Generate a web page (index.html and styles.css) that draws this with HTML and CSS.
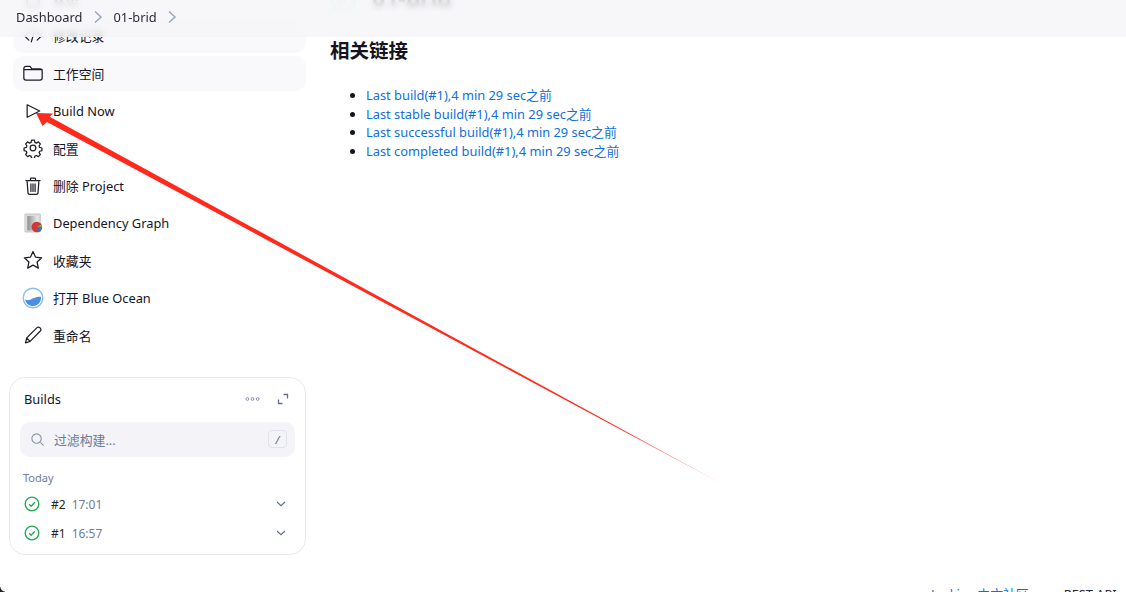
FILE: index.html
```html
<!DOCTYPE html>
<html lang="zh">
<head>
<meta charset="utf-8">
<title>01-brid</title>
<link rel="stylesheet" href="styles.css">
</head>
<body>
<div class="page">
  <header class="topbar">
    <span class="crumb">Dashboard</span>
    <svg class="sep" viewBox="0 0 10 14"><path d="M2 1.500 8 7l-6 5.500"/></svg>
    <span class="crumb">01-brid</span>
    <svg class="sep" viewBox="0 0 10 14"><path d="M2 1.500 8 7l-6 5.500"/></svg>
  </header>

  <div class="app">
    <aside class="sidebar">
      <nav class="menu">
        <a class="item"><svg class="ico" viewBox="0 0 24 24"><rect x="5" y="3" width="14" height="18" rx="2"/></svg><span>状态</span></a>
        <a class="item tinted"><svg class="ico" viewBox="0 0 24 24"><path d="M7 7l-5 5 5 5M17 7l5 5-5 5M14 5l-4 14"/></svg><span>修改记录</span></a>
        <a class="item tinted"><svg class="ico" viewBox="0 0 24 24"><path d="M1 6.500A2.500 2.500 0 0 1 3.500 4h5l2 3h10a2.500 2.500 0 0 1 2.500 2.500v8.500a2.500 2.500 0 0 1-2.500 2.500h-17A2.500 2.500 0 0 1 1 18zM1 8h22"/></svg><span>工作空间</span></a>
        <a class="item"><svg class="ico" viewBox="0 0 24 24"><path d="M5 4.500v15L20 12z"/></svg><span>Build Now</span></a>
        <a class="item"><svg class="ico" viewBox="0 0 24 24"><circle cx="12" cy="12" r="3.400"/><path d="M10.300 2.500h3.400l.6 2.800 1.700.8 2.500-1.400 2.300 2.500-1.500 2.400.7 1.700 2.700.7v3.200l-2.700.7-.7 1.700 1.500 2.400-2.300 2.400-2.500-1.400-1.700.8-.6 2.700h-3.400l-.6-2.700-1.700-.8-2.500 1.400-2.300-2.400 1.500-2.400-.7-1.700-2.700-.7v-3.200l2.700-.7.7-1.700L3.200 7.200l2.300-2.500L8 6.100l1.700-.8z"/></svg><span>配置</span></a>
        <a class="item"><svg class="ico" viewBox="0 0 24 24"><path d="M5 7l1 13.500a1.800 1.800 0 0 0 1.800 1.500h8.400a1.800 1.800 0 0 0 1.800-1.500L19 7M3.500 5.500h17M9 5.500V3.500a1 1 0 0 1 1-1h4a1 1 0 0 1 1 1v2M9.500 9.500v9M12 9.500v9M14.500 9.500v9"/></svg><span>删除 Project</span></a>
        <a class="item"><svg class="ico raw" viewBox="0 0 20 20"><defs><linearGradient id="doc" x1="0" x2="1" y1="0" y2="0"><stop offset="0" stop-color="#8f8f8f"/><stop offset="1" stop-color="#ececec"/></linearGradient></defs><rect x="2.300" y="1" width="15" height="18" fill="#dcdcdc" stroke="#bbb" stroke-width=".8"/><rect x="4.300" y="3" width="10.500" height="14.500" fill="url(#doc)"/><circle cx="13.800" cy="14" r="5.300" fill="#d5343a"/><path d="M13.800 14H19.100A5.300 5.300 0 0 1 15.500 19z" fill="#3a70c4"/><path d="M13.800 14 18.300 11.200A5.300 5.300 0 0 1 19.100 14z" fill="#77b33c"/></svg><span>Dependency Graph</span></a>
        <a class="item"><svg class="ico" viewBox="0 0 24 24"><path d="M12 1.800l3 6.700 7.400.9-5.500 5 1.500 7.300L12 18.100l-6.400 3.600 1.500-7.300-5.500-5 7.400-.9z"/></svg><span>收藏夹</span></a>
        <a class="item"><svg class="ico raw wide" viewBox="0 0 22 22"><circle cx="11" cy="11" r="9.800" fill="#fff" stroke="#8fbdf0" stroke-width="1.400"/><path d="M3 12.500c2.500 1.500 5 .3 7.700-1 3-1.500 5.800-2 8.300-1.800C19.500 15 15.500 19 11 19 7 19 3.800 16.300 3 12.500z" fill="#4b8fe2"/></svg><span>打开 Blue Ocean</span></a>
        <a class="item"><svg class="ico" viewBox="0 0 24 24"><path d="M3 21.500l1.500-6L16.800 3.200a2.300 2.300 0 0 1 3.300 0l.7.700a2.300 2.300 0 0 1 0 3.300L8.500 19.700zM4.500 15.500l4 4.200"/></svg><span>重命名</span></a>
      </nav>

      <section class="card">
        <div class="card-head">
          <span class="card-title">Builds</span>
          <div class="card-tools">
            <svg class="dots" viewBox="0 0 16 6"><circle cx="2.500" cy="3" r="1.500"/><circle cx="8" cy="3" r="1.500"/><circle cx="13.500" cy="3" r="1.500"/></svg>
            <svg class="expand" viewBox="0 0 12 12"><path d="M6.500 1.500h4v4M1.500 6.500v4h4"/></svg>
          </div>
        </div>
        <div class="search">
          <svg class="glass" viewBox="0 0 16 16"><circle cx="7" cy="7" r="5"/><path d="M11 11l3.500 3.500"/></svg>
          <span class="placeholder">过滤构建...</span>
          <span class="kbd">/</span>
        </div>
        <div class="day">Today</div>
        <div class="build">
          <svg class="ok" viewBox="0 0 18 18"><circle cx="9" cy="9" r="7.700"/><path d="M5.800 9.300l2.200 2.200 4.200-4.500"/></svg>
          <span class="num">#2</span><span class="time">17:01</span>
          <svg class="chev" viewBox="0 0 10 6"><path d="M1 1l4 3.600L9 1"/></svg>
        </div>
        <div class="build">
          <svg class="ok" viewBox="0 0 18 18"><circle cx="9" cy="9" r="7.700"/><path d="M5.800 9.300l2.200 2.200 4.200-4.500"/></svg>
          <span class="num">#1</span><span class="time">16:57</span>
          <svg class="chev" viewBox="0 0 10 6"><path d="M1 1l4 3.600L9 1"/></svg>
        </div>
      </section>
    </aside>

    <main class="main">
      <div class="title-row">
        <svg class="title-ok" viewBox="0 0 26 26"><circle cx="13" cy="13" r="11.500"/><path d="M8 13.500l3.500 3.500 6.500-7"/></svg>
        <h1>01-brid</h1>
      </div>
      <h2>相关链接</h2>
      <ul class="links">
        <li><a>Last build(#1),4 min 29 sec之前</a></li>
        <li><a>Last stable build(#1),4 min 29 sec之前</a></li>
        <li><a>Last successful build(#1),4 min 29 sec之前</a></li>
        <li><a>Last completed build(#1),4 min 29 sec之前</a></li>
      </ul>
    </main>
  </div>

  <footer class="foot">
    <a class="foot-cn">Jenkins 中文社区</a>
    <a class="foot-api">REST API</a>
  </footer>

  <svg class="arrow" viewBox="0 0 1126 592">
    <defs>
      <linearGradient id="fade" gradientUnits="userSpaceOnUse" x1="36" y1="113" x2="724" y2="485">
        <stop offset="0" stop-color="#ff2a1c"/>
        <stop offset="0.85" stop-color="#ff2a1c"/>
        <stop offset="1" stop-color="#ff2a1c" stop-opacity="0.35"/>
      </linearGradient>
    </defs>
    <polygon fill="url(#fade)" points="36,113 53,113.500 49.700,116.800 724,485 47,122 42.500,126"/>
  </svg>
  <div class="corner"></div>
</div>
</body>
</html>
```

FILE: styles.css
```css
* { box-sizing: border-box; }
html, body { margin: 0; height: 100%; background: #fff; }
body {
  font-family: "Noto Sans", "Noto Sans CJK SC", sans-serif;
  font-size: 12.850px;
  color: #14141f;
  overflow: hidden;
}
.page {
  position: relative;
  width: 1126px;
  height: 592px;
  overflow: hidden;
  display: flex;
  flex-direction: column;
}
.topbar {
  position: absolute;
  top: 0;
  left: 0;
  right: 0;
  height: 37px;
  display: flex;
  align-items: center;
  padding: 0 0 4px 16px;
  gap: 10px;
  background: rgba(245, 245, 248, 0.82);
  backdrop-filter: blur(3px);
  z-index: 2;
}
.crumb { color: #2a2a35; font-size: 12.850px; }
.sep { width: 10px; height: 14px; fill: none; stroke: #9aa6bb; stroke-width: 1.500; margin-right: 1px; }

.app {
  display: grid;
  grid-template-columns: 320px 1fr;
  margin-top: -19px;
  height: 604px;
  flex: none;
}
.sidebar { padding-left: 9px; }
.menu {
  display: flex;
  flex-direction: column;
  gap: 2.430px;
  margin-left: 4px;
  width: 293px;
}
.item {
  height: 35px;
  display: flex;
  align-items: center;
  gap: 10px;
  padding-left: 10px;
  border-radius: 10px;
  color: #14141f;
}
.tinted { background: #f9f9fc; }
.ico {
  width: 20px;
  height: 20px;
  flex: none;
  fill: none;
  stroke: #1e1e28;
  stroke-width: 1.500;
  stroke-linejoin: round;
  stroke-linecap: round;
}
.raw { stroke: none; }
.wide { width: 22px; height: 22px; margin: 0 -1px; }

.card {
  width: 297px;
  height: 178px;
  margin-top: 24px;
  padding: 11px 10px 0;
  border: 1px solid #e8e8f0;
  border-radius: 16px;
}
.card-head {
  display: flex;
  align-items: center;
  justify-content: space-between;
  height: 20px;
  padding: 0 6px 0 4px;
}
.card-title { color: #14141f; font-size: 12.850px; }
.card-tools { display: flex; align-items: center; gap: 17px; }
.dots { width: 15px; height: 6px; fill: none; stroke: #8590a6; stroke-width: 1; }
.expand { width: 12px; height: 12px; fill: none; stroke: #64708a; stroke-width: 1.300; }
.search {
  display: flex;
  align-items: center;
  height: 35px;
  margin-top: 13px;
  padding: 0 8px 0 10px;
  background: #f3f3f8;
  border-radius: 10px;
}
.glass { width: 15px; height: 15px; fill: none; stroke: #8d97ac; stroke-width: 1.200; flex: none; }
.placeholder { margin-left: 9px; flex: 1; color: #6b7c99; font-size: 12.850px; }
.kbd {
  width: 19px;
  height: 18px;
  display: flex;
  align-items: center;
  justify-content: center;
  border: 1px solid #e2e2ea;
  border-radius: 4px;
  color: #5d6a83;
  font-size: 11px;
  font-style: italic;
}
.day { margin-top: 13px; margin-left: 3px; color: #6d7d9b; font-size: 11px; line-height: 16px; }
.build { display: flex; align-items: center; height: 29px; padding-left: 4px; }
.day + .build { margin-top: 4px; }
.ok { width: 16px; height: 16px; flex: none; fill: none; stroke: #22aa55; stroke-width: 1.500; }
.num { margin-left: 11px; color: #1f1f2a; font-size: 12px; }
.time { margin-left: 6px; color: #6d7d9b; font-size: 12px; flex: 1; }
.chev { width: 10px; height: 6px; margin-right: 9px; fill: none; stroke: #64708a; stroke-width: 1.200; }

.main { padding: 0 0 0 10px; }
.title-row { display: flex; align-items: center; gap: 16px; height: 38px; }
.title-ok { width: 26px; height: 26px; fill: none; stroke: #a8e0c8; stroke-width: 2; flex: none; }
h1 { margin: -4px 0 0; font-size: 23px; font-weight: 700; color: #14141f; }
h2 { margin: 18px 0 0; font-size: 19.500px; line-height: 28px; font-weight: 700; color: #14141f; }
.links { margin: 21px 0 0; padding: 0 0 0 36px; }
.links li { line-height: 18.700px; font-size: 12.850px; color: #14141f; }
.links a { color: #0f6fdd; }

.foot {
  display: flex;
  font-size: 12.850px;
  line-height: 18px;
  padding-left: 931px;
}
.foot-cn { color: #0f6fdd; }
.foot-api { margin-left: 35px; color: #2a2a35; }

.arrow { position: absolute; inset: 0; width: 1126px; height: 592px; z-index: 3; pointer-events: none; }
.corner {
  position: absolute;
  left: 0;
  bottom: 0;
  width: 5px;
  height: 5px;
  background: radial-gradient(circle at 100% 0, transparent 4px, #222 5px);
  z-index: 3;
}
```
